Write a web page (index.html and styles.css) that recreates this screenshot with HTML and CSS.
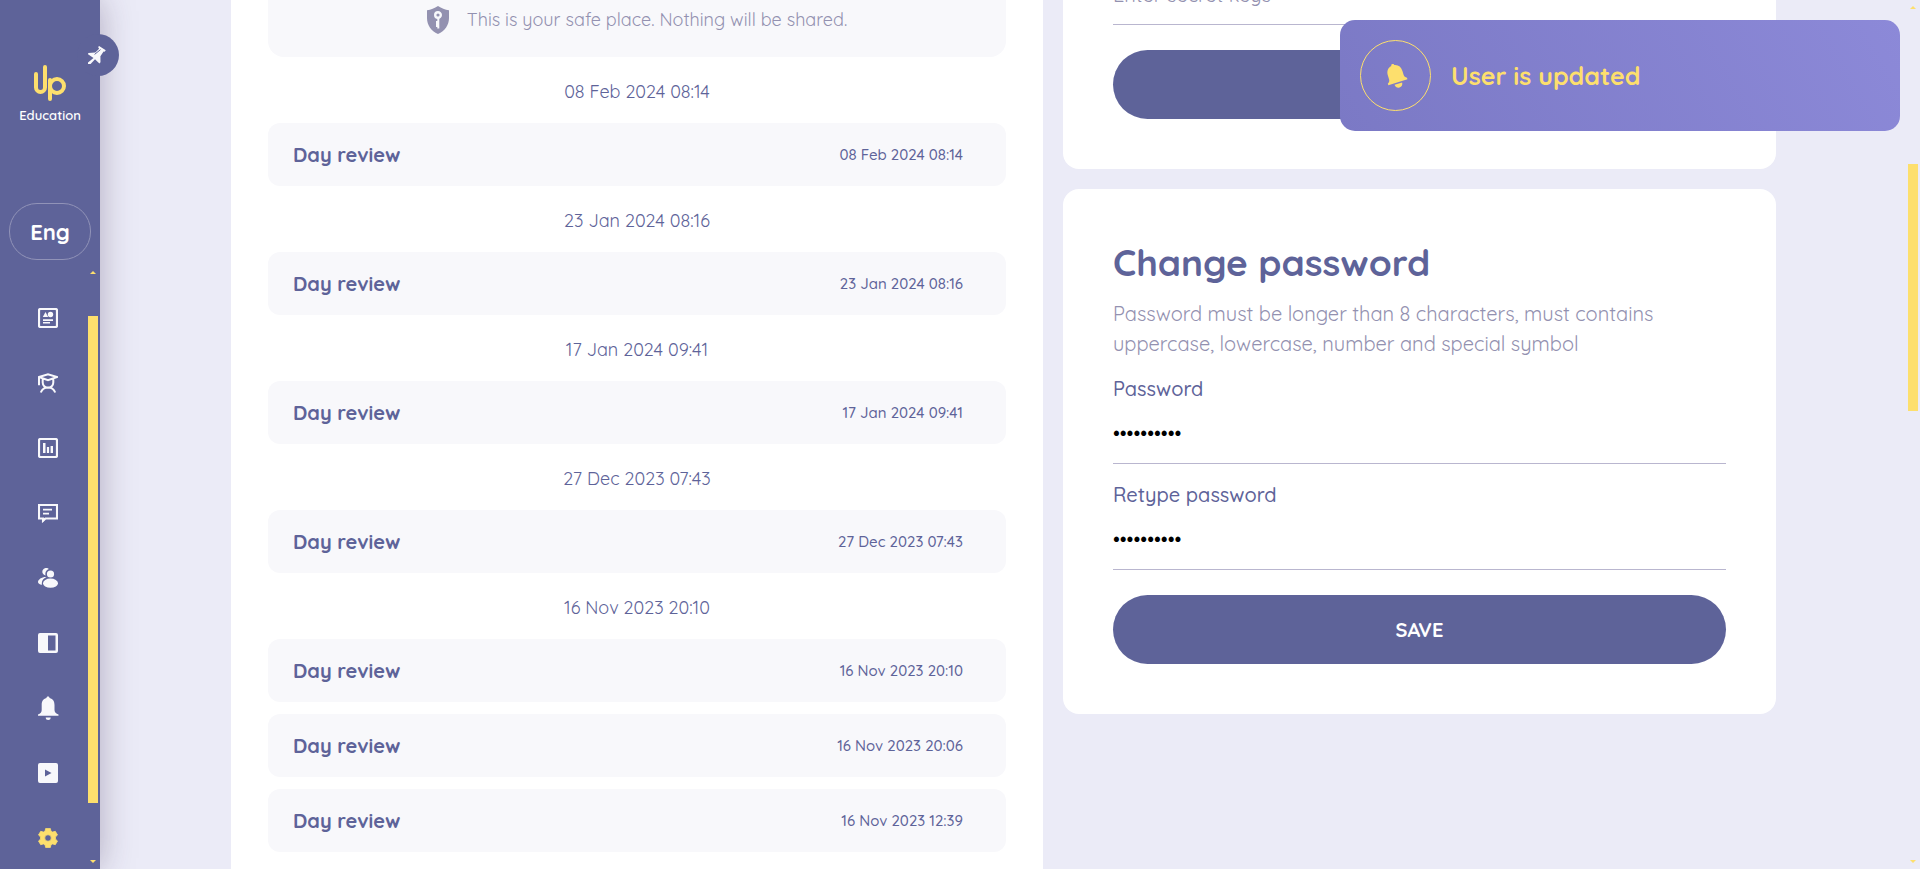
FILE: index.html
```html
<!DOCTYPE html>
<html lang="en">
<head>
<meta charset="utf-8">
<title>Up Education – Settings</title>
<link rel="stylesheet" href="styles.css">
</head>
<body>
<div class="app">
  <aside class="sidebar">
    <button class="pin" type="button" aria-label="Pin menu">
      <svg width="20" height="20" viewBox="0 0 20 20"><path fill="#f8f8fb" d="M12.1 1.1 18.800 5.300 17.600 6.800 16.600 6.600 13.400 11.300 13.500 17.300 12.400 18.500 8 14.200 3.600 18.900 1 18.900 1 17.400 6.500 12.900 1 9.300 1.300 8 8.300 7.500 12.100 3.700 11.100 2.100z"/><path d="M7.600 9.400 13.500 4.600" stroke="#5e6399" stroke-width="1" fill="none"/></svg>
    </button>
    <a class="logo" href="#" aria-label="Up Education">
      <svg width="34" height="38" viewBox="0 0 34 38" fill="none" stroke="#fddf6d" stroke-width="4" stroke-linecap="round"><path d="M3 10v13.500a4.500 4.500 0 0 0 9 0V3M17 16v19"/><circle cx="24" cy="22" r="7"/></svg>
      <span>Education</span>
    </a>
    <button class="lang" type="button">Eng</button>
    <div class="menu">
      <nav class="nav">
        <a href="#" aria-label="Dashboard"><svg viewBox="0 0 20 20"><rect x="1" y="1" width="18" height="18" rx="1.500" fill="none" stroke="currentColor" stroke-width="2.200"/><path d="M7.500 4 10.200 9H4.800z"/><circle cx="12.500" cy="6.500" r="2.700"/><path d="M5 11.300h10v1.600H5zM5 14h7v1.600H5z"/></svg></a>
        <a href="#" aria-label="Students"><svg viewBox="0 0 20 20"><path fill="none" stroke="currentColor" stroke-width="2" d="M1 4 10 1.200 19 4 10 7.200zM1 4v8.300M4.700 5.500v4a5.300 5.300 0 0 0 10.600 0v-4M2.800 19.500c1.200-3.300 3.700-5 7.200-5s6 1.700 7.200 5"/></svg></a>
        <a href="#" aria-label="Reports"><svg viewBox="0 0 20 20"><rect x="1" y="1" width="18" height="18" rx="1.500" fill="none" stroke="currentColor" stroke-width="2.200"/><path d="M5 5h2.500v10H5zM8.900 9h2.200v6H8.900zM12.600 8H15v7h-2.400z"/></svg></a>
        <a href="#" aria-label="Messages"><svg viewBox="0 0 20 20"><path d="M1 2h18v13.500H7.500L5 17.800V15.500H1z" fill="none" stroke="currentColor" stroke-width="2.100"/><path d="M5 5.800h9v1.600H5zM5 9.800h6v1.600H5zM4 15h4l-2.500 3.500H4z"/></svg></a>
        <a href="#" aria-label="Groups"><svg viewBox="0 0 20 20"><circle cx="12.500" cy="6" r="3.600"/><ellipse cx="12.500" cy="15.200" rx="7.500" ry="4.600"/><path d="M10.800 1A3.800 3.800 0 1 0 7.600 7.500 5.200 5.200 0 0 1 10.800 1zM8.500 9C4 8.700 0 11.500 0 14c0 1.500 1.500 2.500 4 2.800C3.200 13.500 5 10.500 8.500 9z"/></svg></a>
        <a href="#" aria-label="Library"><svg viewBox="0 0 20 20"><path fill-rule="evenodd" d="M2 0h16a2 2 0 0 1 2 2v16a2 2 0 0 1-2 2H2a2 2 0 0 1-2-2V2a2 2 0 0 1 2-2zM10 2.500v15h7.500v-15z"/></svg></a>
        <a href="#" aria-label="Notifications"><svg viewBox="0 0 20 20" overflow="visible"><path d="M10-1.500c1 0 1.500.7 1.600 1.600C15.200 1 16.500 3.500 16.500 7v5c0 2 1.500 3.500 4 4.500v1.300H0v-1.300c2.500-1 3.700-2.500 3.700-4.500V7c0-3.500 1.200-6 4.700-6.900C8.500-.8 9-1.500 10-1.500zM7.700 19.500h5c0 1.700-1 2.500-2.500 2.500s-2.500-.8-2.500-2.500z"/></svg></a>
        <a href="#" aria-label="Videos"><svg viewBox="0 0 20 20"><path fill-rule="evenodd" d="M2 0h16a2 2 0 0 1 2 2v16a2 2 0 0 1-2 2H2a2 2 0 0 1-2-2V2a2 2 0 0 1 2-2zM7 6.500v7l6.500-3.500z"/></svg></a>
        <a class="active" href="#" aria-label="Settings"><svg viewBox="0 0 20 20"><path fill-rule="evenodd" stroke="currentColor" stroke-width=".8" stroke-linejoin="round" d="M7.700.4h4.600l.7 2.800 1.600.9 2.700-.8 2.200 3.700-2.100 2v2l2.100 2-2.200 3.700-2.700-.8-1.600.9-.7 2.800H7.700L7 16.800l-1.600-.9-2.700.8L.5 13l2.100-2V9L.5 7l2.200-3.700 2.700.8L7 3.200zM10 6.700a3.300 3.300 0 1 0 0 6.600 3.300 3.300 0 0 0 0-6.600z"/></svg></a>
      </nav>
      <div class="bar bar-menu"><i class="up"></i><i class="thumb"></i><i class="down"></i></div>
    </div>
  </aside>

  <main class="main">
    <div class="content">
      <section class="journal">
        <div class="safe">
          <svg width="22" height="28" viewBox="0 0 22 28"><path fill="#9391b0" d="M11 0c3.500 2.200 7 3.700 11 4.300V12c0 7-4 13-11 16C4 25 0 19 0 12V4.300C4 3.700 7.500 2.200 11 0z"/><circle cx="11" cy="9" r="2.800" fill="none" stroke="#f8f8fb" stroke-width="2.400"/><path d="M11.300 12v10.500M10 15v6" stroke="#f8f8fb" stroke-width="2"/></svg>
          <p>This is your safe place. Nothing will be shared.</p>
        </div>
        <h3>08 Feb 2024 08:14</h3>
        <a class="row" href="#"><b>Day review</b><time>08 Feb 2024 08:14</time></a>
        <h3>23 Jan 2024 08:16</h3>
        <a class="row" href="#"><b>Day review</b><time>23 Jan 2024 08:16</time></a>
        <h3>17 Jan 2024 09:41</h3>
        <a class="row" href="#"><b>Day review</b><time>17 Jan 2024 09:41</time></a>
        <h3>27 Dec 2023 07:43</h3>
        <a class="row" href="#"><b>Day review</b><time>27 Dec 2023 07:43</time></a>
        <h3>16 Nov 2023 20:10</h3>
        <a class="row" href="#"><b>Day review</b><time>16 Nov 2023 20:10</time></a>
        <a class="row" href="#"><b>Day review</b><time>16 Nov 2023 20:06</time></a>
        <a class="row" href="#"><b>Day review</b><time>16 Nov 2023 12:39</time></a>
      </section>

      <div class="forms">
        <form class="card secret">
          <input type="text" placeholder="Enter secret keys" aria-label="Secret keys">
          <button class="save" type="button" aria-label="Save secret keys"></button>
        </form>
        <form class="card password">
          <h2>Change password</h2>
          <p>Password must be longer than 8 characters, must contains uppercase, lowercase, number and special symbol</p>
          <label for="pass">Password</label>
          <input id="pass" type="password" value="Abcdef12!x">
          <label for="pass2">Retype password</label>
          <input id="pass2" type="password" value="Abcdef12!x">
          <button class="save" type="button">SAVE</button>
        </form>
      </div>
    </div>
    <div class="bar bar-page"><i class="up"></i><i class="thumb"></i><i class="down"></i></div>
  </main>

  <div class="toast" role="status">
    <span class="ring"><svg width="24" height="26" viewBox="0 0 24 26"><g transform="rotate(-17 12 13)" fill="#fddf6d"><path d="M12 .5c1 0 1.600.7 1.600 1.600 4 .8 6 3.800 6 8v4c0 2 .9 3 2.400 3.700v1.700H2v-1.700c1.500-.7 2.400-1.700 2.400-3.700v-4c0-4.200 2-7.200 6-8C10.400 1.200 11 .5 12 .5zM8 21h8c-.2 2.500-1.700 4-4 4s-3.800-1.500-4-4z"/></g></svg></span>
    <strong>User is updated</strong>
  </div>
</div>
</body>
</html>
```
FILE: styles.css
```css
* { box-sizing: border-box; }

body {
  margin: 0;
  font-family: Quicksand, Lato, sans-serif;
  color: #5e6399;
  background: #ebebf7;
}

h2, h3, p { margin: 0; }
a { color: inherit; text-decoration: none; }
button, input { font-family: inherit; }
svg { display: block; }

.app { display: flex; height: 100vh; overflow: hidden; position: relative; }

/* Sidebar */
.sidebar {
  position: relative;
  z-index: 2;
  flex: none;
  width: 100px;
  display: flex;
  flex-direction: column;
  align-items: center;
  padding-top: 64px;
  background: #5e6399;
  box-shadow: 0 0 32px rgba(60, 40, 80, .34);
}

.pin {
  position: absolute;
  top: 34px;
  right: -19px;
  width: 42px;
  height: 42px;
  padding: 10px;
  border: 0;
  border-radius: 50%;
  background: #5e6399;
}

.logo { display: flex; flex-direction: column; align-items: center; gap: 3px; }
.logo span { font-size: 13px; line-height: 20px; font-weight: 600; color: #fff; }

.lang {
  width: 82px;
  height: 57px;
  margin-top: 78px;
  border: 1px solid #9193b8;
  border-radius: 28px;
  background: none;
  color: #fff;
  font-size: 22px;
  font-weight: 700;
}

.menu { flex: 1; min-height: 0; width: 100%; display: flex; margin-top: 10px; }
.nav { flex: 1; display: flex; flex-direction: column; gap: 45px; padding: 38px 0 0 38px; color: #f8f8fb; }
.nav a { height: 20px; }
.nav svg { width: 20px; height: 20px; fill: currentColor; }
.nav .active { color: #fddf6d; }

/* Scroll bars */
.bar { display: flex; flex-direction: column; align-items: center; width: 14px; }
.bar i { flex: none; }
.bar .thumb { width: 10px; background: #fddf6d; }
.bar .up, .bar .down { border: 3px solid transparent; }
.bar .up { border-top: 0; border-bottom-color: #fddf6d; }
.bar .down { border-bottom: 0; border-top-color: #fddf6d; margin-top: auto; margin-bottom: 6px; }
.bar-menu { padding-top: 1px; }
.bar-menu .thumb { height: 81.5%; margin-top: 42px; }
.bar-page { flex: none; padding-top: 6px; }
.bar-page .thumb { height: 28.6%; margin-top: 155px; }

/* Page */
.main { flex: 1; min-width: 0; display: flex; }

/* The page is scrolled, so its cards begin above the window */
.content {
  flex: 1;
  display: grid;
  grid-template-columns: 812fr 713fr;
  gap: 20px;
  width: 100%;
  margin-top: -40px;
  padding: 0 7.15% 0 7.2%;
}

.journal { padding: 0 37px; background: #fff; }

.safe {
  display: flex;
  align-items: center;
  justify-content: center;
  gap: 18px;
  height: 97px;
  padding-top: 22px;
  border-radius: 0 0 16px 16px;
  background: #f8f8fb;
  color: #9391b0;
  font-size: 18px;
}

.journal h3 {
  font-size: 18px;
  line-height: 26px;
  font-weight: 400;
  text-align: center;
  padding: 22px 0 18px;
}

.row {
  display: flex;
  align-items: center;
  justify-content: space-between;
  height: 63px;
  padding: 0 43px 0 25px;
  border-radius: 12px;
  background: #f8f8fb;
}
.row + .row { margin-top: 12px; }
.row b { font-size: 20px; }
.row time { font-size: 15px; font-weight: 500; }

.forms { display: flex; flex-direction: column; gap: 20px; }
.card {
  display: flex;
  flex-direction: column;
  padding: 50px;
  border-radius: 16px;
  background: #fff;
}
.card input {
  width: 100%;
  height: 60px;
  padding: 0;
  border: 0;
  border-bottom: 1px solid #b9b6cf;
  background: none;
  color: #000;
  font-size: 20px;
}
.secret { padding-top: 5px; }
.card input::placeholder { color: #9391b0; opacity: 1; }

.card h2 { font-size: 37px; line-height: 46px; font-weight: 700; }
.card p { padding: 14px 0 15px; font-size: 20px; line-height: 30px; font-weight: 400; color: #9391b0; }
.card label { font-size: 20px; line-height: 30px; font-weight: 500; }
.card input + label { margin-top: 16px; }

.save {
  height: 69px;
  margin-top: 25px;
  border: 0;
  border-radius: 35px;
  background: #5e6399;
  color: #fff;
  font-size: 20px;
  font-weight: 700;
}

/* Notification over the page */
.toast {
  position: absolute;
  z-index: 3;
  top: 20px;
  right: 20px;
  width: 560px;
  display: flex;
  align-items: center;
  gap: 20px;
  padding: 20px;
  border-radius: 15px;
  background: linear-gradient(60deg, #7b79c5, #8c89d8);
  color: #fddf6d;
  font-size: 25px;
}
.ring {
  display: grid;
  place-items: center;
  width: 71px;
  height: 71px;
  border: 1px solid #fddf6d;
  border-radius: 50%;
}
```
